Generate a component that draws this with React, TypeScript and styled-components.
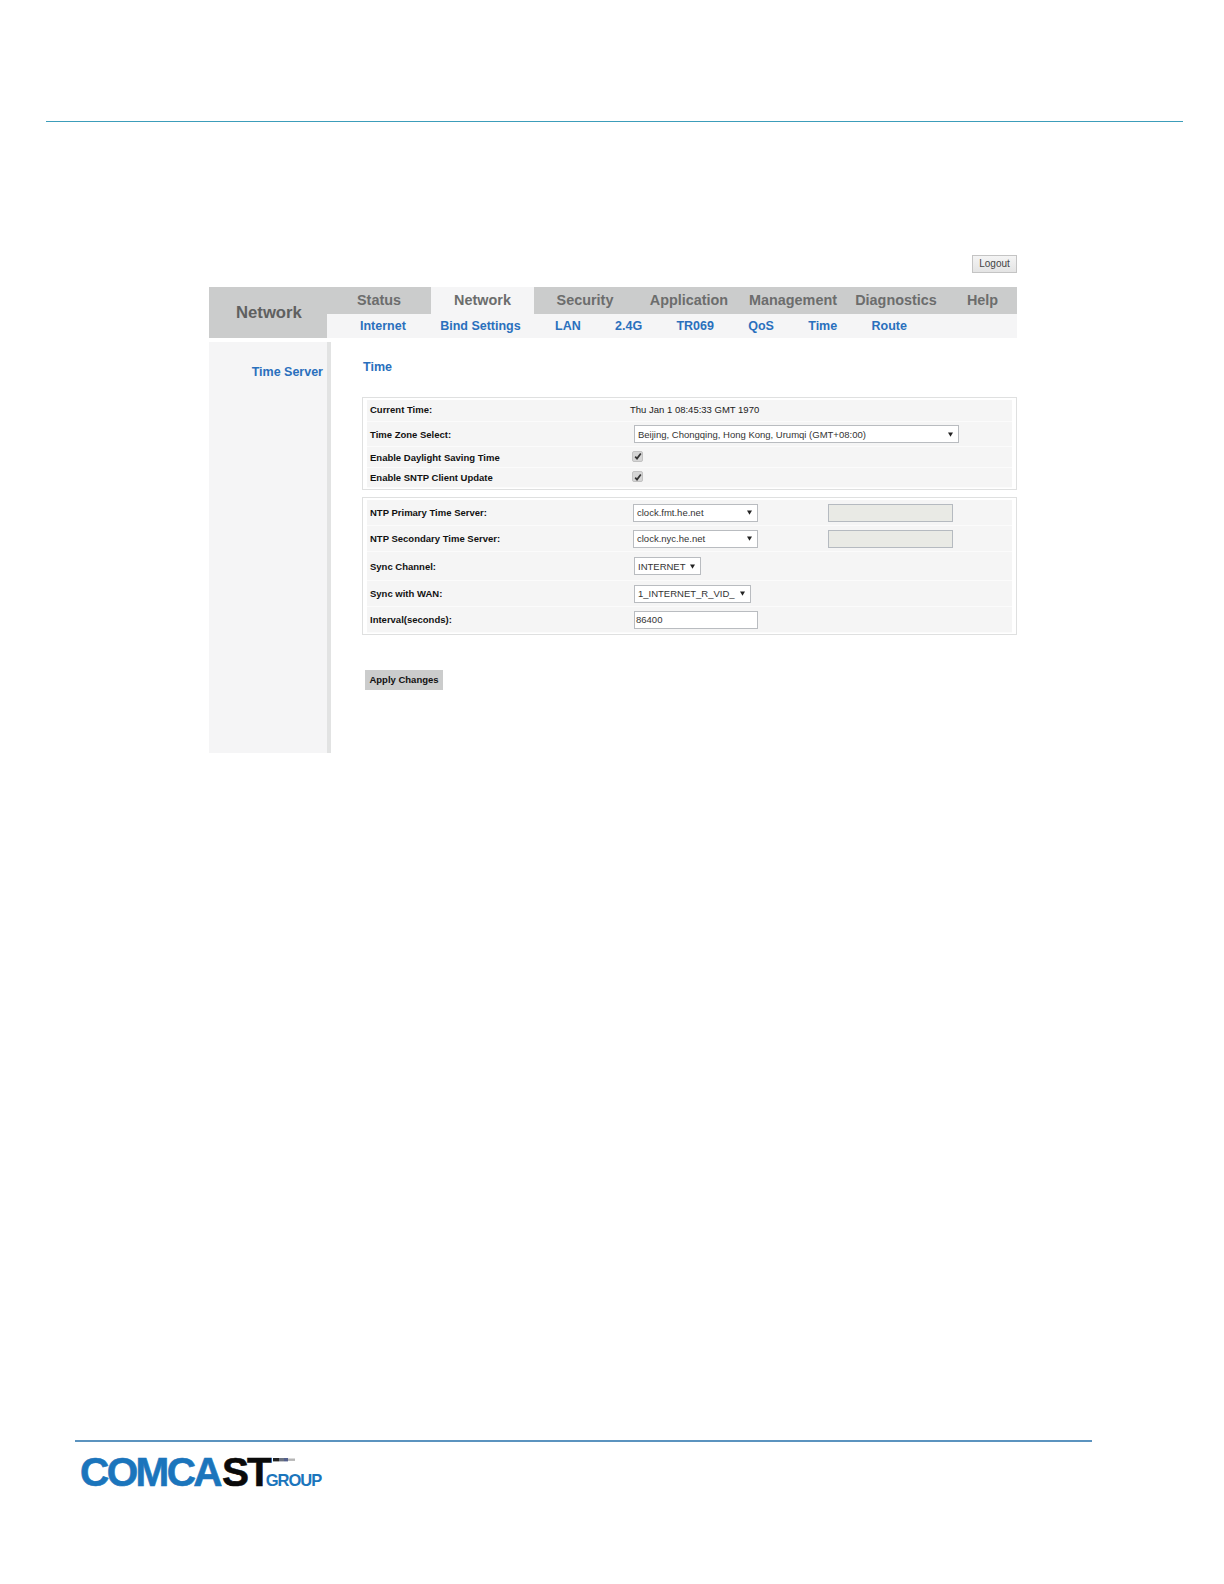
import styled, { createGlobalStyle } from "styled-components";

const GlobalStyle = createGlobalStyle`
  html, body {
    margin: 0;
    padding: 0;
    background: #ffffff;
    font-family: "Liberation Sans", Arial, sans-serif;
  }
`;

const TABS = [
  { name: "Status", width: 104 },
  { name: "Network", width: 103, active: true },
  { name: "Security", width: 102 },
  { name: "Application", width: 106 },
  { name: "Management", width: 102 },
  { name: "Diagnostics", width: 104 },
  { name: "Help", width: 69 },
];

const SUB_LINKS = ["Internet", "Bind Settings", "LAN", "2.4G", "TR069", "QoS", "Time", "Route"];

const Caret = () => (
  <svg width="5" height="5" viewBox="0 0 5 5">
    <path d="M0 0.5h5L2.5 4.8z" fill="#222" />
  </svg>
);

const Check = () => (
  <CheckBox>
    <svg width="8" height="8" viewBox="0 0 8 8">
      <path d="M1.2 4.6 3 6.6 6.8 1.4" fill="none" stroke="#333" strokeWidth="1.7" />
    </svg>
  </CheckBox>
);

const App = () => {
  return (
    <Page>
      <GlobalStyle />
      <TopRule />
      <Screen>
        <LogoutRow>
          <LogoutButton>Logout</LogoutButton>
        </LogoutRow>
        <NavBar>
          <SectionTitle>Network</SectionTitle>
          <NavColumn>
            <TabRow>
              {TABS.map((tab) => (
                <Tab key={tab.name} $width={tab.width} $active={tab.active}>
                  {tab.name}
                </Tab>
              ))}
            </TabRow>
            <SubRow>
              {SUB_LINKS.map((link) => (
                <SubLink key={link}>{link}</SubLink>
              ))}
            </SubRow>
          </NavColumn>
        </NavBar>
        <Body>
          <Sidebar>
            <SideLink>Time Server</SideLink>
          </Sidebar>
          <Content>
            <ContentTitle>Time</ContentTitle>
            <FirstPanel>
              <Row $height={22} $lift={3}>
                <Label>Current Time:</Label>
                <ValueText>Thu Jan 1 08:45:33 GMT 1970</ValueText>
              </Row>
              <Row $height={25}>
                <Label>Time Zone Select:</Label>
                <Value>
                  <SelectBox $width={325}>
                    <span>Beijing, Chongqing, Hong Kong, Urumqi (GMT+08:00)</span>
                    <Caret />
                  </SelectBox>
                </Value>
              </Row>
              <Row $height={21}>
                <Label>Enable Daylight Saving Time</Label>
                <Value>
                  <Check />
                </Value>
              </Row>
              <Row $height={20}>
                <Label>Enable SNTP Client Update</Label>
                <Value>
                  <Check />
                </Value>
              </Row>
            </FirstPanel>
            <SecondPanel>
              <Row $height={26}>
                <Label>NTP Primary Time Server:</Label>
                <Value>
                  <SelectBox $width={125} $shift={-1}>
                    <span>clock.fmt.he.net</span>
                    <Caret />
                  </SelectBox>
                  <DisabledInput />
                </Value>
              </Row>
              <Row $height={26}>
                <Label>NTP Secondary Time Server:</Label>
                <Value>
                  <SelectBox $width={125} $shift={-1}>
                    <span>clock.nyc.he.net</span>
                    <Caret />
                  </SelectBox>
                  <DisabledInput />
                </Value>
              </Row>
              <Row $height={29}>
                <Label>Sync Channel:</Label>
                <Value>
                  <SelectBox $width={67}>
                    <span>INTERNET</span>
                    <Caret />
                  </SelectBox>
                </Value>
              </Row>
              <Row $height={26}>
                <Label>Sync with WAN:</Label>
                <Value>
                  <SelectBox $width={117}>
                    <span>1_INTERNET_R_VID_</span>
                    <Caret />
                  </SelectBox>
                </Value>
              </Row>
              <Row $height={26}>
                <Label>Interval(seconds):</Label>
                <Value>
                  <TextBox>86400</TextBox>
                </Value>
              </Row>
            </SecondPanel>
            <ApplyButton>Apply Changes</ApplyButton>
          </Content>
        </Body>
      </Screen>
      <Footer>
        <FooterRule />
        <Logo>
          <LogoBlue>COMCA</LogoBlue>
          <LogoBlack>ST</LogoBlack>
          <LogoGroup>GROUP</LogoGroup>
          <Cable width="22" height="6" viewBox="0 0 22 6">
            <rect x="0" y="1" width="6" height="3.4" fill="#222" />
            <rect x="6" y="1" width="5" height="3.4" fill="#6b7280" />
            <rect x="11" y="1" width="4" height="3.4" fill="#54608c" />
            <rect x="15" y="1.5" width="7" height="2.4" fill="#b5b5b5" />
          </Cable>
        </Logo>
      </Footer>
    </Page>
  );
};

const Page = styled.div`
  width: 1224px;
  height: 1584px;
  display: flex;
  flex-direction: column;
  overflow: hidden;
`;

const TopRule = styled.div`
  height: 1px;
  margin: 121px 41px 0 46px;
  background: #3c9dba;
`;

const Screen = styled.div`
  width: 808px;
  margin: 133px 0 0 209px;
`;

const LogoutRow = styled.div`
  display: flex;
  justify-content: flex-end;
  height: 32px;
`;

const LogoutButton = styled.div`
  width: 45px;
  height: 18px;
  box-sizing: border-box;
  border: 1px solid #c4c4c4;
  background: linear-gradient(#f4f4f4, #e4e4e4);
  color: #444;
  font-size: 10px;
  line-height: 16px;
  text-align: center;
`;

const NavBar = styled.div`
  display: flex;
  height: 51px;
  background: #cbcccc;
`;

const SectionTitle = styled.div`
  width: 118px;
  padding-left: 27px;
  box-sizing: border-box;
  color: #5f6060;
  font-size: 16.7px;
  font-weight: 700;
  line-height: 51px;
`;

const NavColumn = styled.div`
  width: 690px;
  display: flex;
  flex-direction: column;
`;

const TabRow = styled.div`
  display: flex;
  height: 27px;
`;

const Tab = styled.div<{ $width: number; $active?: boolean }>`
  width: ${(p) => p.$width}px;
  background: ${(p) => (p.$active ? "#f5f5f6" : "transparent")};
  color: #6c6d6d;
  font-size: 14.4px;
  font-weight: 700;
  line-height: 27px;
  text-align: center;
`;

const SubRow = styled.div`
  display: flex;
  gap: 34.3px;
  height: 24px;
  padding-left: 33px;
  background: #f5f5f6;
`;

const SubLink = styled.div`
  color: #2a70bd;
  font-size: 12.5px;
  font-weight: 700;
  line-height: 25px;
`;

const Body = styled.div`
  display: flex;
  margin-top: 4px;
  height: 411px;
`;

const Sidebar = styled.div`
  width: 122px;
  box-sizing: border-box;
  padding: 22px 4px 0 0;
  background: #f5f5f6;
  border-right: 4px solid #e2e3e3;
  text-align: right;
`;

const SideLink = styled.div`
  color: #2a70bd;
  font-size: 12.5px;
  font-weight: 700;
  line-height: 16px;
`;

const Content = styled.div`
  flex: 1;
  padding-left: 31px;
`;

const ContentTitle = styled.div`
  margin: 17px 0 0 1px;
  color: #2a70bd;
  font-size: 12.5px;
  font-weight: 700;
  line-height: 16px;
`;

const Panel = styled.div`
  width: 655px;
  box-sizing: border-box;
  padding: 2px 4px 1px;
  border: 1px solid #dfe0e0;
  display: flex;
  flex-direction: column;
`;

const FirstPanel = styled(Panel)`
  margin-top: 22px;
  height: 93px;
`;

const SecondPanel = styled(Panel)`
  margin-top: 7px;
  height: 138px;
`;

const Row = styled.div<{ $height: number; $lift?: number }>`
  height: ${(p) => p.$height}px;
  padding-bottom: ${(p) => p.$lift ?? 0}px;
  flex: none;
  display: flex;
  align-items: center;
  background: #f5f5f5;
  border-bottom: 1px solid #fbfbfb;
  box-sizing: border-box;
`;

const Label = styled.div`
  width: 262px;
  flex: none;
  padding-left: 3px;
  box-sizing: border-box;
  color: #111;
  font-size: 9.5px;
  font-weight: 700;
`;

const ValueText = styled.div`
  padding-left: 1px;
  color: #222;
  font-size: 9.5px;
`;

const Value = styled.div`
  display: flex;
  align-items: center;
  padding-left: 5px;
`;

const SelectBox = styled.div<{ $width: number; $shift?: number }>`
  width: ${(p) => p.$width}px;
  height: 18px;
  margin-left: ${(p) => p.$shift ?? 0}px;
  box-sizing: border-box;
  display: flex;
  align-items: center;
  justify-content: space-between;
  padding: 0 5px 0 3px;
  background: #ffffff;
  border: 1px solid #b9bcc0;
  color: #333;
  font-size: 9.5px;
  white-space: nowrap;
`;

const DisabledInput = styled.div`
  width: 125px;
  height: 18px;
  margin-left: 70px;
  box-sizing: border-box;
  background: #e9eae5;
  border: 1px solid #b5bac0;
`;

const TextBox = styled.div`
  width: 124px;
  height: 18px;
  box-sizing: border-box;
  padding-left: 1px;
  background: #ffffff;
  border: 1px solid #b9bcc0;
  color: #333;
  font-size: 9.5px;
  line-height: 16px;
`;

const CheckBox = styled.div`
  width: 9px;
  height: 9px;
  margin: 0 0 2px -2px;
  display: flex;
  align-items: center;
  justify-content: center;
  background: #d5d5d5;
  border: 1px solid #c2c2c2;
  border-radius: 2px;
`;

const ApplyButton = styled.div`
  width: 78px;
  height: 20px;
  margin: 35px 0 0 3px;
  background: #cbcccc;
  color: #111;
  font-size: 9.5px;
  font-weight: 700;
  line-height: 20px;
  text-align: center;
`;

const Footer = styled.div`
  margin-top: auto;
  padding: 0 132px 93px 75px;
`;

const FooterRule = styled.div`
  height: 2px;
  background: #5b93bf;
`;

const Logo = styled.div`
  position: relative;
  display: flex;
  align-items: baseline;
  height: 38px;
  margin: 11px 0 0 5px;
  line-height: 38px;
  font-weight: 700;
  white-space: nowrap;
`;

const LogoBlue = styled.span`
  color: #1b75bc;
  font-size: 40.5px;
  letter-spacing: -2.6px;
  -webkit-text-stroke: 0.6px #1b75bc;
`;

const LogoBlack = styled.span`
  margin-left: 2px;
  color: #0a0a0a;
  font-size: 40.5px;
  letter-spacing: -2px;
  -webkit-text-stroke: 0.6px #0a0a0a;
`;

const LogoGroup = styled.span`
  margin-left: -4px;
  color: #1b75bc;
  font-size: 16.5px;
  letter-spacing: -1px;
`;

const Cable = styled.svg`
  position: absolute;
  left: 193px;
  top: 4px;
`;

export default App;
